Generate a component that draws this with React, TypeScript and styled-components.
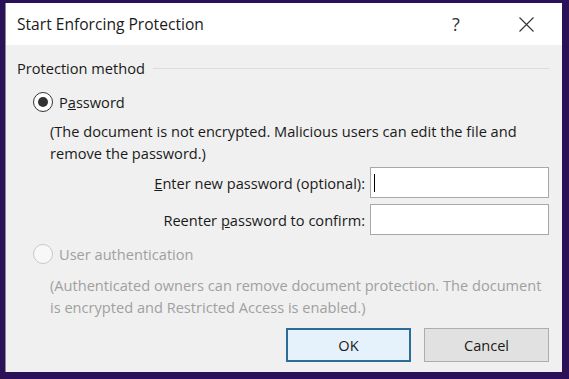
import React from 'react'
import styled, { createGlobalStyle } from 'styled-components'

const GlobalStyle = createGlobalStyle`
  html, body {
    margin: 0;
    padding: 0;
    background: #2a1158;
  }
  * {
    box-sizing: border-box;
  }
`

const Frame = styled.div`
  width: 569px;
  height: 379px;
  padding: 3px 7px 7px 5px;
  background: #2a1158;
`

const Dialog = styled.div`
  width: 557px;
  height: 369px;
  display: flex;
  flex-direction: column;
  background: #f0f0f0;
  border-left: 1px solid #8a8a8a;
  font-family: 'Segoe UI', 'Open Sans', 'Noto Sans', sans-serif;
  color: #1a1a1a;
`

const TitleBar = styled.div`
  height: 42px;
  background: #ffffff;
  display: flex;
  align-items: center;
  padding-left: 11px;
`

const Title = styled.div`
  flex: 1;
  font-size: 15.6px;
  color: #1a1a1a;
`

const TitleButton = styled.div<{ $w: number }>`
  width: ${(p) => p.$w}px;
  height: 42px;
  display: flex;
  align-items: center;
  justify-content: center;
  font-size: 18px;
  color: #333;
`

const Body = styled.div`
  flex: 1;
  display: flex;
  flex-direction: column;
  padding: 12px 13px 0 11px;
  font-size: 14.6px;
`

const GroupHeader = styled.div`
  display: flex;
  align-items: center;
  gap: 8px;
  height: 22px;
`

const GroupLine = styled.div`
  flex: 1;
  height: 1px;
  background: #dcdcdc;
`

const RadioRow = styled.label<{ $disabled?: boolean }>`
  display: flex;
  align-items: center;
  gap: 6px;
  margin-left: 16px;
  height: 22px;
  color: ${(p) => (p.$disabled ? '#a0a0a0' : '#1a1a1a')};
`

const RadioCircle = styled.span<{ $checked?: boolean; $disabled?: boolean }>`
  width: 20px;
  height: 20px;
  border-radius: 50%;
  border: 1px solid ${(p) => (p.$disabled ? '#c8c8c8' : '#333')};
  background: ${(p) => (p.$disabled ? '#f8f8f8' : '#fff')};
  display: flex;
  align-items: center;
  justify-content: center;
  &::after {
    content: '';
    display: ${(p) => (p.$checked ? 'block' : 'none')};
    width: 10px;
    height: 10px;
    border-radius: 50%;
    background: #333;
  }
`

const Note = styled.div<{ $disabled?: boolean }>`
  margin-left: 33px;
  line-height: 22px;
  white-space: nowrap;
  color: ${(p) => (p.$disabled ? '#a0a0a0' : '#1a1a1a')};
`

const FieldGrid = styled.div`
  display: grid;
  grid-template-columns: 1fr 179px;
  column-gap: 5px;
  row-gap: 6px;
  align-items: center;
`

const FieldLabel = styled.div`
  text-align: right;
`

const Input = styled.div<{ $caret?: boolean }>`
  height: 31px;
  background: #fff;
  border: 1px solid #a8a8a8;
  position: relative;
  &::after {
    content: '';
    display: ${(p) => (p.$caret ? 'block' : 'none')};
    position: absolute;
    left: 3px;
    top: 6px;
    width: 1px;
    height: 18px;
    background: #000;
  }
`

const Buttons = styled.div`
  display: flex;
  justify-content: flex-end;
  gap: 13px;
`

const Button = styled.div<{ $default?: boolean }>`
  width: 125px;
  height: 34px;
  display: flex;
  align-items: center;
  justify-content: center;
  background: ${(p) => (p.$default ? '#e5f1fb' : '#e1e1e1')};
  border: ${(p) => (p.$default ? '2px solid #2c6c96' : '1px solid #adadad')};
`

const U = styled.span`
  text-decoration: underline;
`

export default function App() {
  return (
    <>
      <GlobalStyle />
      <Frame>
        <Dialog>
          <TitleBar>
            <Title>Start Enforcing Protection</Title>
            <TitleButton $w={68}>?</TitleButton>
            <TitleButton $w={72}>
              <svg width="15" height="15" viewBox="0 0 15 15">
                <path d="M0.5 0.5 L14.5 14.5 M14.5 0.5 L0.5 14.5" stroke="#333" strokeWidth="1.1" fill="none" />
              </svg>
            </TitleButton>
          </TitleBar>
          <Body>
            <GroupHeader>
              Protection method
              <GroupLine />
            </GroupHeader>
            <RadioRow style={{ marginTop: 12 }}>
              <RadioCircle $checked />
              <span>
                P<U>a</U>ssword
              </span>
            </RadioRow>
            <Note style={{ marginTop: 7 }}>
              (The document is not encrypted. Malicious users can edit the file and
              <br />
              remove the password.)
            </Note>
            <FieldGrid style={{ marginTop: 3 }}>
              <FieldLabel>
                <U>E</U>nter new password (optional):
              </FieldLabel>
              <Input $caret />
              <FieldLabel>
                Reenter <U>p</U>assword to confirm:
              </FieldLabel>
              <Input />
            </FieldGrid>
            <RadioRow $disabled style={{ marginTop: 8 }}>
              <RadioCircle $disabled />
              <span>User authentication</span>
            </RadioRow>
            <Note $disabled style={{ marginTop: 9 }}>
              (Authenticated owners can remove document protection. The document
              <br />
              is encrypted and Restricted Access is enabled.)
            </Note>
            <Buttons style={{ marginTop: 10 }}>
              <Button $default>OK</Button>
              <Button>Cancel</Button>
            </Buttons>
          </Body>
        </Dialog>
      </Frame>
    </>
  )
}
